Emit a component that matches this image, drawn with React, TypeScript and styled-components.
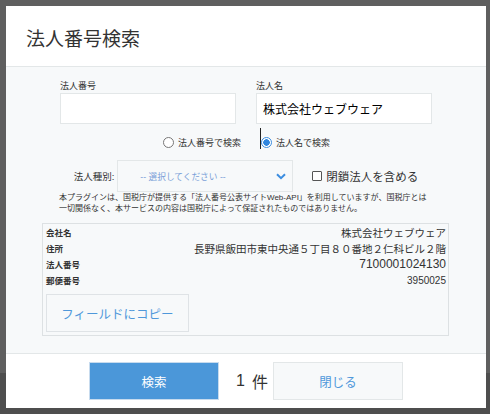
import React from 'react';
import styled, { createGlobalStyle } from 'styled-components';

const GlobalStyle = createGlobalStyle`
    html, body {
        margin: 0;
        padding: 0;
    }
    body {
        min-height: 414px;
        background: linear-gradient(#5f5f5f 0 373px, #4e4e4e 373px);
        font-family: 'Liberation Sans', 'Noto Sans CJK JP', sans-serif;
        color: #333;
    }
`;

const Backdrop = styled.div`
    padding: 6px;
`;

const Dialog = styled.div`
    width: 480px;
    height: 402px;
    background: #fff;
    display: flex;
    flex-direction: column;
`;

const Header = styled.div`
    height: 60px;
    border-bottom: 1px solid #e3e7e8;
    display: flex;
    align-items: center;
    padding-left: 20px;
`;

const Title = styled.h1`
    margin: 0;
    font-size: 19px;
    font-weight: 400;
    color: #333;
    padding-top: 2px;
`;

const Body = styled.div`
    background: #f7f9fa;
    padding: 13px 0 17px;
    height: 286px;
    box-sizing: border-box;
`;

const FieldRow = styled.div`
    display: flex;
    justify-content: center;
    gap: 20px;
`;

const Field = styled.div`
    width: 176px;
`;

const FieldLabel = styled.div`
    font-size: 9px;
    line-height: 13px;
    color: #333;
`;

const TextInput = styled.div`
    height: 31px;
    box-sizing: border-box;
    border: 1px solid #e3e7e8;
    background: #fff;
    padding: 0 6px;
    display: flex;
    align-items: center;
    font-size: 12px;
    color: #000;
`;

const RadioRow = styled.div`
    margin-top: 10px;
    height: 16px;
    display: flex;
    justify-content: center;
    gap: 19px;
`;

const RadioLabel = styled.label<{ $caret?: boolean }>`
    position: relative;
    display: flex;
    align-items: center;
    gap: 4px;
    font-size: 9px;
    color: #333;
    &::before {
        content: '';
        display: ${(p) => (p.$caret ? 'block' : 'none')};
        position: absolute;
        left: 0;
        top: -6px;
        width: 1px;
        height: 21px;
        background: #222;
    }
`;

const RadioDot = styled.span<{ $checked?: boolean }>`
    width: 11px;
    height: 11px;
    box-sizing: border-box;
    border-radius: 50%;
    border: 1px solid ${(p) => (p.$checked ? '#3b8de0' : '#777')};
    background: ${(p) => (p.$checked ? 'radial-gradient(circle, #2f86df 0 3px, #fff 3.5px)' : '#fff')};
    margin-left: 1px;
`;

const FilterRow = styled.div`
    margin-top: 10px;
    height: 32px;
    display: flex;
    align-items: center;
    justify-content: center;
`;

const FilterLabel = styled.span`
    font-size: 9.5px;
    color: #333;
    margin-right: 3px;
`;

const Select = styled.div`
    width: 176px;
    height: 32px;
    box-sizing: border-box;
    border: 1px solid #e3e7e8;
    display: flex;
    align-items: center;
    padding: 0 6px 0 22px;
    font-size: 8.7px;
    color: #7a9fd8;
`;

const SelectText = styled.span`
    flex: 1;
`;

const CheckLabel = styled.label`
    margin-left: 19px;
    display: flex;
    align-items: center;
    gap: 4px;
    font-size: 11.5px;
    color: #333;
`;

const CheckBox = styled.span`
    width: 10px;
    height: 10px;
    box-sizing: border-box;
    border: 1px solid #555;
    border-radius: 1px;
    background: #fff;
`;

const Note = styled.p`
    margin: 0;
    padding: 0 55px 0 53px;
    font-size: 8px;
    line-height: 11px;
    color: #333;
`;

const ResultBox = styled.div`
    margin: 9px 37px 0 36px;
    height: 113px;
    box-sizing: border-box;
    border: 1px solid #dde1e3;
    padding: 0 2px 0 3px;
`;

const ResultGrid = styled.div`
    display: grid;
    grid-template-columns: auto 1fr;
    grid-auto-rows: 16px;
    align-items: center;
`;

const ResultKey = styled.div`
    font-size: 8.5px;
    font-weight: 700;
    color: #333;
`;

const ResultValue = styled.div<{ $size: number }>`
    text-align: right;
    font-size: ${(p) => p.$size}px;
    color: #333;
    white-space: nowrap;
`;

const CopyButton = styled.button`
    margin-top: 6px;
    width: 143px;
    height: 38px;
    border: 1px solid #dfe3e6;
    background: #f7f9fa;
    color: #4f98da;
    font-family: inherit;
    font-size: 12.5px;
    padding: 0;
`;

const Footer = styled.div`
    flex: 1;
    border-top: 1px solid #e3e7e8;
    display: flex;
    justify-content: center;
    padding-top: 8px;
`;

const Button = styled.button<{ $primary?: boolean }>`
    width: 130px;
    height: 38px;
    padding: 0;
    font-family: inherit;
    font-size: 12.5px;
    border: 1px solid ${(p) => (p.$primary ? '#c7dbee' : '#e3e7e8')};
    background: ${(p) => (p.$primary ? '#4b97d9' : '#f7f9fa')};
    color: ${(p) => (p.$primary ? '#fff' : '#4f98da')};
`;

const Count = styled.span`
    margin: 0 6px 0 17px;
    width: 31px;
    height: 38px;
    display: flex;
    align-items: center;
    gap: 7px;
    font-size: 16px;
    color: #333;
    white-space: nowrap;
`;

const Chevron = () => (
    <svg width="10" height="7" viewBox="0 0 10 7">
        <path d="M1 1.2 L5 5.2 L9 1.2" fill="none" stroke="#3b8de0" strokeWidth="2" />
    </svg>
);

const results = [
    { key: '会社名', value: '株式会社ウェブウェア', size: 10.5 },
    { key: '住所', value: '長野県飯田市東中央通５丁目８０番地２仁科ビル２階', size: 10.5 },
    { key: '法人番号', value: '7100001024130', size: 12 },
    { key: '郵便番号', value: '3950025', size: 10 },
];

const App = () => {
    return (
        <>
            <GlobalStyle />
            <Backdrop>
                <Dialog>
                    <Header>
                        <Title>法人番号検索</Title>
                    </Header>
                    <Body>
                        <FieldRow>
                            <Field>
                                <FieldLabel>法人番号</FieldLabel>
                                <TextInput />
                            </Field>
                            <Field>
                                <FieldLabel>法人名</FieldLabel>
                                <TextInput>株式会社ウェブウェア</TextInput>
                            </Field>
                        </FieldRow>
                        <RadioRow>
                            <RadioLabel>
                                <RadioDot />
                                法人番号で検索
                            </RadioLabel>
                            <RadioLabel $caret>
                                <RadioDot $checked />
                                法人名で検索
                            </RadioLabel>
                        </RadioRow>
                        <FilterRow>
                            <FilterLabel>法人種別:</FilterLabel>
                            <Select>
                                <SelectText>-- 選択してください --</SelectText>
                                <Chevron />
                            </Select>
                            <CheckLabel>
                                <CheckBox />
                                閉鎖法人を含める
                            </CheckLabel>
                        </FilterRow>
                        <Note>
                            本プラグインは、国税庁が提供する「法人番号公表サイトWeb-API」を利用していますが、国税庁とは一切関係なく、本サービスの内容は国税庁によって保証されたものではありません。
                        </Note>
                        <ResultBox>
                            <ResultGrid>
                                {results.map((r) => (
                                    <React.Fragment key={r.key}>
                                        <ResultKey>{r.key}</ResultKey>
                                        <ResultValue $size={r.size}>{r.value}</ResultValue>
                                    </React.Fragment>
                                ))}
                            </ResultGrid>
                            <CopyButton>フィールドにコピー</CopyButton>
                        </ResultBox>
                    </Body>
                    <Footer>
                        <Button $primary>検索</Button>
                        <Count>
                            <span>1</span>
                            <span>件</span>
                        </Count>
                        <Button>閉じる</Button>
                    </Footer>
                </Dialog>
            </Backdrop>
        </>
    );
};

export default App;
